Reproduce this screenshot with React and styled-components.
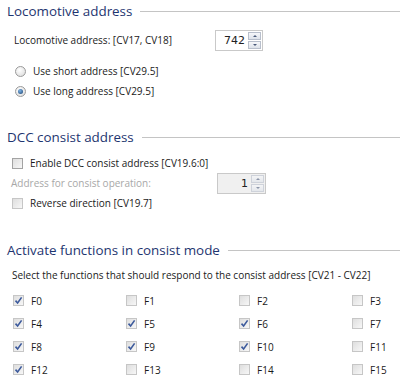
import styled, { createGlobalStyle } from 'styled-components';

const GlobalStyle = createGlobalStyle`
  html, body {
    margin: 0;
    padding: 0;
    background: #ffffff;
  }
  body {
    font-family: 'Open Sans', 'Noto Sans', sans-serif;
    font-size: 10px;
    color: #1a1a1a;
  }
`;

const Page = styled.div`
  width: 400px;
  height: 388px;
  overflow: hidden;
  padding: 2px 0 0 7px;
  box-sizing: border-box;
`;

const Section = styled.section`
  margin-bottom: ${(p) => p.$gap || 0}px;
`;

const Heading = styled.div`
  display: flex;
  align-items: center;
  gap: 8px;
  height: 18px;
  font-size: 13.4px;
  color: #1e3570;
  white-space: nowrap;

  &::after {
    content: '';
    flex: 1;
    height: 1px;
    background: #c4c4c4;
    margin-top: 1px;
  }
`;

const Body = styled.div`
  padding: ${(p) => p.$top || 0}px 0 0 ${(p) => p.$left || 5}px;
  display: flex;
  flex-direction: column;
`;

const Row = styled.div`
  display: flex;
  align-items: center;
  flex-shrink: 0;
  height: ${(p) => p.$h || 20}px;
  color: ${(p) => (p.$muted ? '#a8a8a8' : '#1a1a1a')};
  white-space: nowrap;
`;

const Label = styled.span`
  width: ${(p) => p.$w}px;
  flex-shrink: 0;
`;

const Spinner = styled.div`
  display: flex;
  width: ${(p) => p.$w}px;
  height: 21px;
  box-sizing: border-box;
  border: 1px solid #c9c9c9;
  background: ${(p) => (p.$disabled ? '#f0f0f0' : '#ffffff')};
`;

const SpinValue = styled.span`
  flex: 1;
  text-align: right;
  padding-right: 3px;
  line-height: 19px;
  font-family: 'DejaVu Sans', sans-serif;
  font-size: 11px;
  color: #222;
`;

const SpinButtons = styled.div`
  display: flex;
  flex-direction: column;
  width: 13px;
  padding: 1px 1px 1px 0;
  gap: 1px;
`;

const SpinButton = styled.div`
  flex: 1;
  border: 1px solid #b8bfcc;
  background: linear-gradient(#f6f7fa, #dde2ea);
  display: flex;
  align-items: center;
  justify-content: center;
  opacity: ${(p) => (p.$disabled ? 0.6 : 1)};
`;

const Arrow = styled.span`
  width: 0;
  height: 0;
  border-left: 2.5px solid transparent;
  border-right: 2.5px solid transparent;
  ${(p) => (p.$down ? 'border-top' : 'border-bottom')}: 2.5px solid #4a5a7a;
`;

const Radio = styled.span`
  width: 11px;
  height: 11px;
  border-radius: 50%;
  box-sizing: border-box;
  border: 1px solid #9a9a9a;
  background: radial-gradient(circle at 40% 35%, #ffffff, #d8d8d8);
  margin: 0 7px 0 1px;
  display: flex;
  align-items: center;
  justify-content: center;

  &::after {
    content: '';
    display: ${(p) => (p.$checked ? 'block' : 'none')};
    width: 5px;
    height: 5px;
    border-radius: 50%;
    background: radial-gradient(circle at 40% 35%, #7fb4e6, #17406f);
  }
`;

const Box = styled.span`
  width: 11px;
  height: 11px;
  box-sizing: border-box;
  border: 1px solid ${(p) => (p.$muted ? '#c6c6c6' : '#a3a3a3')};
  background: linear-gradient(135deg, #dedede, #f7f7f7);
  margin: 0 7px 0 1px;
  display: flex;
  align-items: center;
  justify-content: center;
  flex-shrink: 0;
`;

const Grid = styled.div`
  display: grid;
  grid-template-columns: repeat(4, 113px);
  grid-auto-rows: 23px;
  align-items: center;
  padding-top: 4px;
`;

function Check() {
  return (
    <svg width="9" height="9" viewBox="0 0 9 9">
      <path d="M1.5 4.6 L3.6 7 L7.6 1.4" fill="none" stroke="#3c5a9c" strokeWidth="1.6" />
    </svg>
  );
}

function Checkbox({ checked, muted, children }) {
  return (
    <Row $h={23}>
      <Box $muted={muted}>{checked && <Check />}</Box>
      {children}
    </Row>
  );
}

function NumberField({ value, width, disabled }) {
  return (
    <Spinner $w={width} $disabled={disabled}>
      <SpinValue>{value}</SpinValue>
      <SpinButtons>
        <SpinButton $disabled={disabled}><Arrow /></SpinButton>
        <SpinButton $disabled={disabled}><Arrow $down /></SpinButton>
      </SpinButtons>
    </Spinner>
  );
}

const functions = [
  ['F0', true], ['F1', false], ['F2', false], ['F3', false],
  ['F4', true], ['F5', true], ['F6', true], ['F7', false],
  ['F8', true], ['F9', true], ['F10', true], ['F11', false],
  ['F12', true], ['F13', false], ['F14', false], ['F15', false],
];

export default function App() {
  return (
    <>
      <GlobalStyle />
      <Page>
        <Section $gap={27}>
          <Heading>Locomotive address</Heading>
          <Body $top={8} $left={7}>
            <Row $h={24}>
              <Label $w={201}>Locomotive address: [CV17, CV18]</Label>
              <NumberField value="742" width={48} />
            </Row>
            <Row $h={9} />
            <Row $h={20}>
              <Radio />
              Use short address [CV29.5]
            </Row>
            <Row $h={20}>
              <Radio $checked />
              Use long address [CV29.5]
            </Row>
          </Body>
        </Section>

        <Section $gap={28}>
          <Heading>DCC consist address</Heading>
          <Body $top={7} $left={4}>
            <Row $h={20}>
              <Box />
              Enable DCC consist address [CV19.6:0]
            </Row>
            <Row $h={20} $muted>
              <Label $w={206}>Address for consist operation:</Label>
              <NumberField value="1" width={49} disabled />
            </Row>
            <Row $h={20}>
              <Box $muted />
              Reverse direction [CV19.7]
            </Row>
          </Body>
        </Section>

        <Section>
          <Heading>Activate functions in consist mode</Heading>
          <Body $top={6} $left={5}>
            <Row $h={20}>
              Select the functions that should respond to the consist address [CV21 - CV22]
            </Row>
            <Grid>
              {functions.map(([name, on]) => (
                <Checkbox key={name} checked={on} muted>
                  {name}
                </Checkbox>
              ))}
            </Grid>
          </Body>
        </Section>
      </Page>
    </>
  );
}
